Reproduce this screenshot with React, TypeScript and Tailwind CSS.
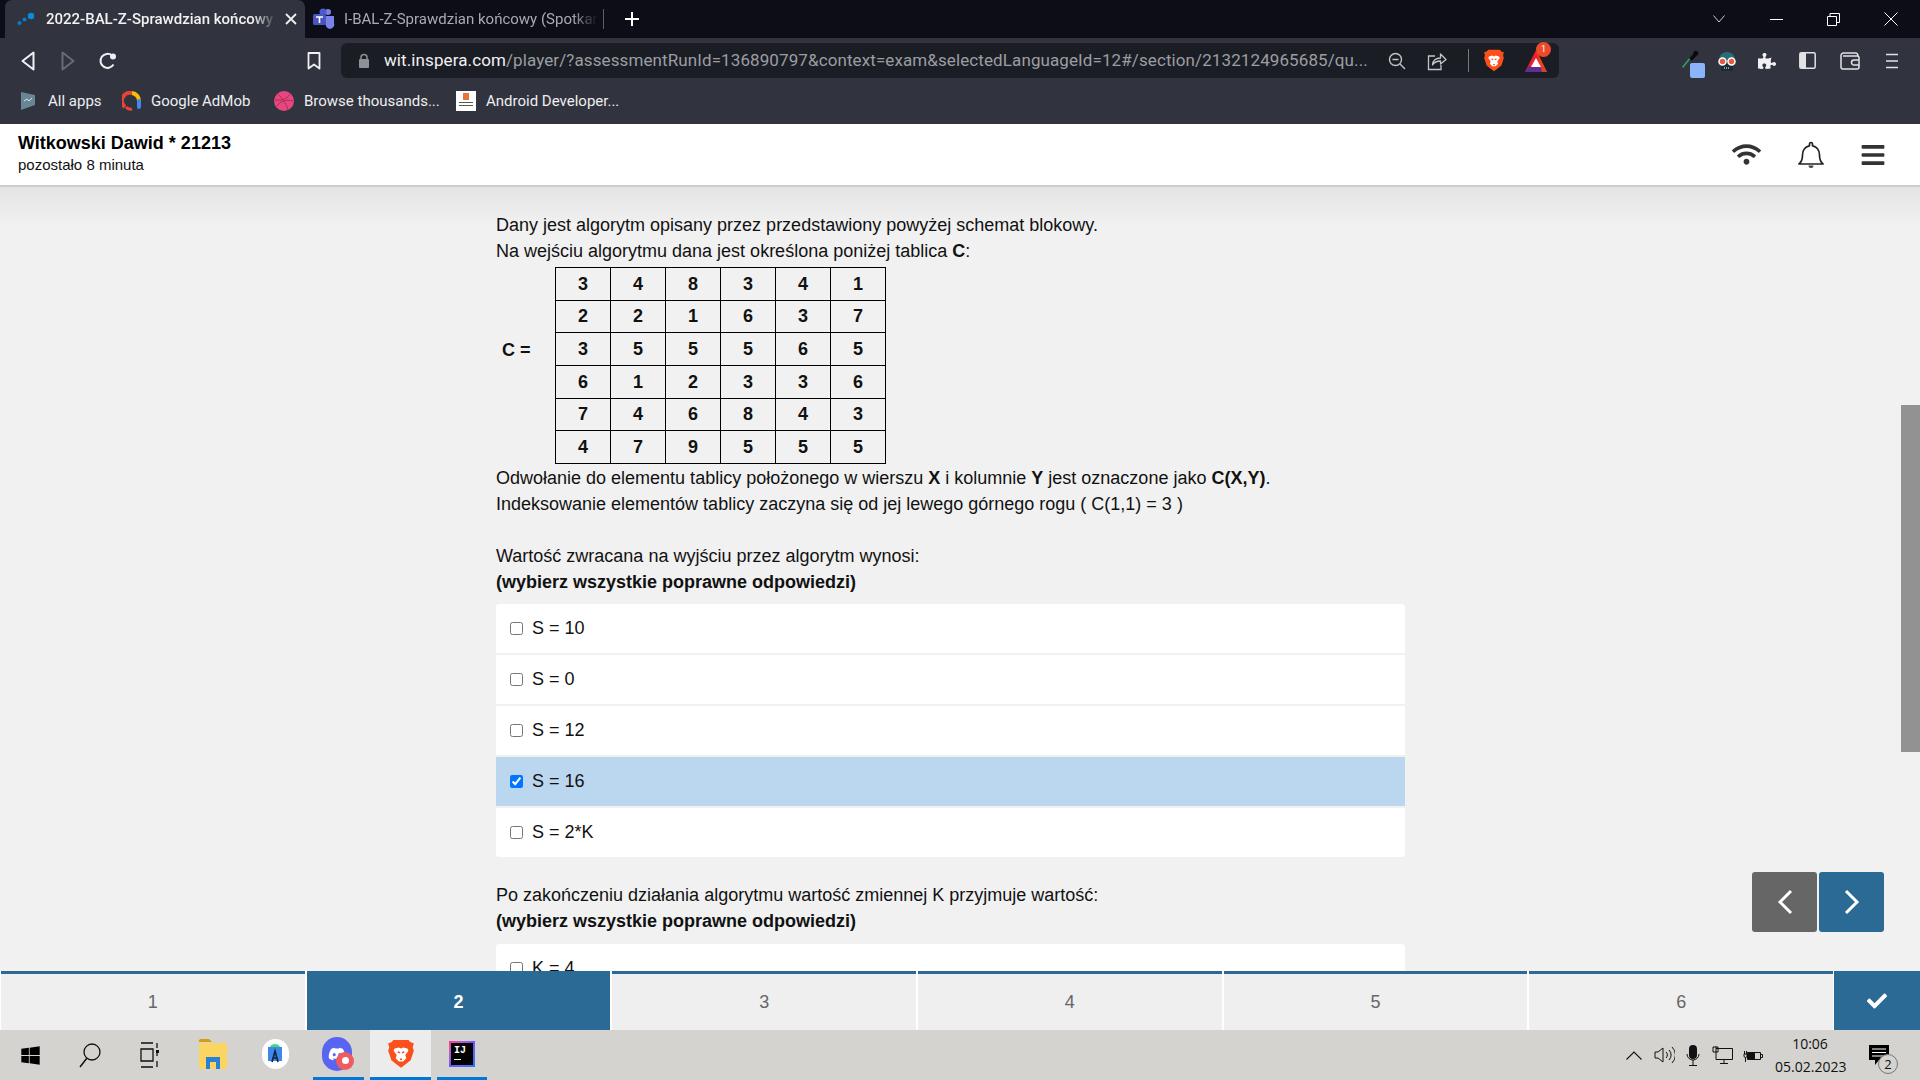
import { FaBars, FaCheck, FaDiscord, FaPuzzlePiece, FaWifi, FaWindows } from "react-icons/fa";

const matrix = [
  [3, 4, 8, 3, 4, 1],
  [2, 2, 1, 6, 3, 7],
  [3, 5, 5, 5, 6, 5],
  [6, 1, 2, 3, 3, 6],
  [7, 4, 6, 8, 4, 3],
  [4, 7, 9, 5, 5, 5],
];

const options = ["S = 10", "S = 0", "S = 12", "S = 16", "S = 2*K"];

function BraveLogo({ size }: { size: number }) {
  return (
    <svg width={size} height={size * 1.15} viewBox="0 0 24 28">
      <path d="M5 1h14l2 2 3 1-1 4 1 3-3 9-5 4-4 3-4-3-5-4-3-9 1-3-1-4 3-1z" fill="#fb4f1c" />
      <path d="M6 9l4-1 2 1 2-1 4 1 1 2-3 4 1 3-3 3h-4l-3-3 1-3-3-4z" fill="#fff" />
      <path d="M9 12l2 1M15 12l-2 1M11 19h2" stroke="#fb4f1c" strokeWidth="1.5" />
    </svg>
  );
}

function BatLogo() {
  return (
    <svg width="24" height="24" viewBox="0 0 24 24">
      <path d="M12 1L1 23h22z" fill="#e8212f" />
      <path d="M1 23l4-6h14l4 6z" fill="#662d91" />
      <path d="M12 1l11 22h-5z" fill="#ff5000" opacity="0.7" />
      <path d="M12 9l-5 9h10z" fill="#fff" />
    </svg>
  );
}

function ChromeTabs() {
  return (
    <div className="h-[38px] bg-[#0c0d17] flex font-['Roboto',sans-serif] text-[15px]">
      <div className="ml-[5px] w-[300px] bg-[#31343f] rounded-t-[7px] flex items-center text-[#f1f1f3] font-medium">
        <svg className="ml-[12px]" width="18" height="14" viewBox="0 0 18 14">
          <circle cx="2.5" cy="11" r="2" fill="#0a7ccf" />
          <circle cx="7.5" cy="7.5" r="2" fill="#0a7ccf" />
          <circle cx="14" cy="4" r="3.2" fill="#0a8ae0" />
        </svg>
        <span className="ml-[11px] w-[230px] overflow-hidden whitespace-nowrap [mask-image:linear-gradient(to_right,black_90%,transparent)]">
          2022-BAL-Z-Sprawdzian końcowy
        </span>
        <svg className="ml-[9px]" width="12" height="12" viewBox="0 0 12 12">
          <path d="M1 1l10 10M11 1L1 11" stroke="#f1f1f3" strokeWidth="1.8" />
        </svg>
      </div>
      <div className="w-[298px] flex items-center text-[#a9abb2]">
        <svg className="ml-[8px]" width="22" height="22" viewBox="0 0 22 22">
          <circle cx="15" cy="4" r="3" fill="#7b83eb" />
          <path d="M10 8h11v7a4 4 0 0 1-8 3z" fill="#7b83eb" />
          <circle cx="10" cy="4" r="3.5" fill="#5059c9" />
          <rect x="0" y="6" width="13" height="11" rx="1.5" fill="#4b53bc" />
          <path d="M3 9h7M6.500 9v6" stroke="#fff" strokeWidth="1.6" />
        </svg>
        <span className="ml-[9px] w-[254px] overflow-hidden whitespace-nowrap [mask-image:linear-gradient(to_right,black_90%,transparent)]">
          I-BAL-Z-Sprawdzian końcowy (Spotkanie)
        </span>
      </div>
      <div className="w-px h-[20px] mt-[9px] bg-[#5a5c66]" />
      <svg className="ml-[20px] mt-[11px]" width="16" height="16" viewBox="0 0 16 16">
        <path d="M8 1v14M1 8h14" stroke="#fff" strokeWidth="2" />
      </svg>
      <div className="ml-auto flex items-center">
        <svg className="mr-[45px]" width="12" height="8" viewBox="0 0 12 8">
          <path d="M.5.500L6 7l5.500-6.500" stroke="#c9cad0" fill="none" />
        </svg>
        <div className="w-[13px] h-px bg-white mr-[44px]" />
        <svg className="mr-[44px]" width="13" height="13" viewBox="0 0 13 13">
          <path d="M.5 3.500h9v9h-9zM3 3.500V.5h9.500v9H9.500" stroke="#fff" fill="none" />
        </svg>
        <svg className="mr-[22px]" width="14" height="14" viewBox="0 0 14 14">
          <path d="M.5.5l13 13M13.500.5l-13 13" stroke="#fff" />
        </svg>
      </div>
    </div>
  );
}

function ChromeToolbar() {
  return (
    <div className="h-[45px] flex items-center pl-[8px]">
      <div className="w-[40px] flex justify-center">
        <svg width="14" height="20" viewBox="0 0 14 20">
          <path d="M12.500 1.500v17L1.500 10z" stroke="#f1f1f3" strokeWidth="2" fill="none" strokeLinejoin="round" />
        </svg>
      </div>
      <div className="w-[40px] flex justify-center">
        <svg width="14" height="20" viewBox="0 0 14 20">
          <path d="M1.500 1.500v17l11-8.500z" stroke="#686a74" strokeWidth="2" fill="none" strokeLinejoin="round" />
        </svg>
      </div>
      <div className="w-[40px] flex justify-center">
        <svg width="18" height="18" viewBox="0 0 18 18">
          <path d="M14.500 12.500A7 7 0 1 1 13 3.500" stroke="#f1f1f3" strokeWidth="2" fill="none" />
          <circle cx="14" cy="4.500" r="3" fill="#f1f1f3" />
        </svg>
      </div>
      <div className="w-[40px] ml-[166px] flex justify-center">
        <svg width="14" height="18" viewBox="0 0 14 18">
          <path d="M1.500 1h11v15.500L7 12.500l-5.500 4z" stroke="#f1f1f3" strokeWidth="1.800" fill="none" strokeLinejoin="round" />
        </svg>
      </div>
      <div className="ml-[7px] w-[1218px] h-[35px] bg-[#1b1d25] rounded-[6px] flex items-center">
        <svg className="ml-[17px]" width="12" height="15" viewBox="0 0 12 15">
          <path d="M3 7V4.500a3 3 0 0 1 6 0V7" stroke="#8f9197" strokeWidth="1.500" fill="none" />
          <rect x="1" y="6" width="10" height="9" rx="1" fill="#8f9197" />
        </svg>
        <div className="ml-[14px] w-[984px] whitespace-nowrap overflow-hidden font-['Roboto',sans-serif] text-[17px] tracking-[0.1px] text-[#9b9da3]">
          <span className="text-[#f1f1f3]">wit.inspera.com</span>
          /player/?assessmentRunId=136890797&amp;context=exam&amp;selectedLanguageId=12#/section/2132124965685/qu...
        </div>
        <svg className="ml-[20px]" width="18" height="18" viewBox="0 0 18 18">
          <circle cx="7.500" cy="7.500" r="6" stroke="#c4c5c9" strokeWidth="1.400" fill="none" />
          <path d="M4.500 7.500h6M12 12l5 5" stroke="#c4c5c9" strokeWidth="1.400" />
        </svg>
        <svg className="ml-[21px]" width="20" height="20" viewBox="0 0 20 20">
          <path d="M8 5H1.500v13.500h12.500V14" stroke="#c4c5c9" strokeWidth="1.300" fill="none" />
          <path d="M5.500 14c.5-5 4-7 8-7V3l5.500 5.500L13.500 13V10c-3 0-6 1-8 4z" stroke="#c4c5c9" strokeWidth="1.300" fill="none" strokeLinejoin="round" />
        </svg>
        <div className="ml-[21px] w-px h-[23px] bg-[#77797f]" />
        <div className="ml-[15px] flex">
          <BraveLogo size={20} />
        </div>
        <div className="ml-[20px] relative flex">
          <BatLogo />
          <span className="absolute left-[12px] -top-[7px] w-[15px] h-[15px] rounded-full bg-[#ee4a2a] text-white text-[9px] leading-[15px] text-center font-['Roboto',sans-serif]">
            1
          </span>
        </div>
      </div>
      <div className="ml-[109px] w-[40px] relative h-[35px]">
        <svg className="absolute left-[12px] top-[7px]" width="20" height="20" viewBox="0 0 24 24">
          <path d="M3 21l9-11" stroke="#2f9e5b" strokeWidth="2" />
          <path d="M11 10l6-6 3 3-6 6z" fill="#0b0b0f" />
          <circle cx="19" cy="4" r="3" fill="#0b0b0f" />
        </svg>
        <div className="absolute left-[22px] top-[20px] w-[15px] h-[15px] rounded-[2px] bg-[#8ab4fb]" />
      </div>
      <div className="w-[38px] flex justify-center">
        <svg width="20" height="22" viewBox="0 0 20 22">
          <path d="M2 10a8 8 0 0 1 16 0v2H2z" fill="#2a6b7c" />
          <path d="M4 14h12v6a1 1 0 0 1-1 1H5a1 1 0 0 1-1-1z" fill="#1b2a33" />
          <circle cx="5.500" cy="11.500" r="3.500" fill="#e85c3e" stroke="#fff" strokeWidth="1.500" />
          <circle cx="14.500" cy="11.500" r="3.500" fill="#e85c3e" stroke="#fff" strokeWidth="1.500" />
          <path d="M7 18h6" stroke="#8fd0dc" strokeWidth="1.500" strokeDasharray="1 1" />
        </svg>
      </div>
      <div className="w-[42px] flex justify-center text-[#f1f1f3] text-[18px]">
        <FaPuzzlePiece />
      </div>
      <div className="w-[38px] flex justify-center">
        <svg width="17" height="17" viewBox="0 0 17 17">
          <rect x=".8" y=".8" width="15.400" height="15.400" rx="1.500" stroke="#e2e2e5" strokeWidth="1.500" fill="none" />
          <rect x="1" y="1" width="6" height="15" fill="#e2e2e5" />
        </svg>
      </div>
      <div className="w-[48px] flex justify-center">
        <svg width="20" height="18" viewBox="0 0 20 18">
          <path d="M1 5V3.500A2.500 2.500 0 0 1 3.500 1h12A2.500 2.500 0 0 1 18 3.500V5M1 4v11a2 2 0 0 0 2 2h14a2 2 0 0 0 2-2V6a2 2 0 0 0-2-2H3" stroke="#e2e2e5" strokeWidth="1.500" fill="none" />
          <path d="M19 8h-5a2.500 2.500 0 0 0 0 5h5" stroke="#e2e2e5" strokeWidth="1.500" fill="none" />
        </svg>
      </div>
      <div className="w-[36px] flex justify-center">
        <svg width="14" height="16" viewBox="0 0 14 16">
          <path d="M1 1.500h12M1 8h12M1 14.500h12" stroke="#e2e2e5" strokeWidth="1.600" />
        </svg>
      </div>
    </div>
  );
}

function Bookmarks() {
  return (
    <div className="h-[36px] flex items-center pl-[20px] font-['Roboto',sans-serif] text-[15px] text-[#eeeef0] whitespace-nowrap">
      <svg width="16" height="18" viewBox="0 0 16 18">
        <path d="M1 0l14 3v10L1 18z" fill="#6a8593" />
        <path d="M4 9l3-2 2 2 3-3" stroke="#dbe4ea" strokeWidth="1" fill="none" />
      </svg>
      <span className="ml-[12px] w-[52px]">All apps</span>
      <svg className="ml-[22px]" width="20" height="20" viewBox="0 0 20 20">
        <path d="M3 16A8 8 0 0 1 10 2" stroke="#ea4335" strokeWidth="4" fill="none" />
        <path d="M10 2a8 8 0 0 1 7 8" stroke="#fbbc04" strokeWidth="4" fill="none" />
        <path d="M17 10v6" stroke="#4285f4" strokeWidth="4" strokeLinecap="round" />
        <path d="M4 16a6 6 0 0 0 6 2" stroke="#ea4335" strokeWidth="3" fill="none" />
      </svg>
      <span className="ml-[9px] w-[102px]">Google AdMob</span>
      <svg className="ml-[21px]" width="20" height="20" viewBox="0 0 20 20">
        <circle cx="10" cy="10" r="10" fill="#e6477e" />
        <path d="M4 3c4 4 8 9 10 16M1 9c6 1 12-1 15-6M3 15c3-5 9-7 16-5" stroke="#b12a5b" fill="none" />
      </svg>
      <span className="ml-[10px] w-[131px]">Browse thousands...</span>
      <div className="ml-[21px] w-[20px] h-[20px] bg-white flex flex-col items-center pt-[2px]">
        <div className="w-[6px] h-[7px] bg-[#e8743b]" />
        <div className="w-[14px] h-px mt-[2px] bg-[#555]" />
        <div className="w-[14px] h-px mt-[2px] bg-[#555]" />
      </div>
      <span className="ml-[10px]">Android Developer...</span>
    </div>
  );
}

function PageHeader() {
  return (
    <header className="h-[63px] shrink-0 bg-white border-b-2 border-[#cccccc] flex items-center font-['Liberation_Sans',sans-serif] relative z-10">
      <div className="ml-[18px] pb-[4px]">
        <div className="text-[18px] leading-[24px] font-bold text-black">Witkowski Dawid * 21213</div>
        <div className="text-[15px] leading-[19px] text-[#111]">pozostało 8 minuta</div>
      </div>
      <div className="ml-auto flex items-center text-[#333]">
        <FaWifi className="text-[29px]" />
        <svg className="ml-[37px]" width="26" height="28" viewBox="0 0 26 28">
          <path
            d="M1 23c2.500-2 3.500-4 3.500-9 0-5 3-8.500 7-9.200V3a1.500 1.500 0 0 1 3 0v1.800c4 .7 7 4.200 7 9.200 0 5 1 7 3.500 9z"
            stroke="#222"
            strokeWidth="1.700"
            fill="none"
            strokeLinejoin="round"
          />
          <path d="M10.500 24.500a2.500 2.500 0 0 0 5 0z" fill="#444" />
        </svg>
        <FaBars className="ml-[36px] mr-[34px] text-[26px]" />
      </div>
    </header>
  );
}

function OptionRow({ label, checked }: { label: string; checked?: boolean }) {
  return (
    <label className={"h-[49px] shrink-0 flex items-center pl-[14px] " + (checked ? "bg-[#bbd6ef]" : "bg-white")}>
      <input type="checkbox" defaultChecked={checked} className="w-[13px] h-[13px] m-0 accent-[#0075ff]" />
      <span className="ml-[9px]">{label}</span>
    </label>
  );
}

function Question() {
  return (
    <div className="w-[909px] ml-[496px] pt-[25px] text-[18px] leading-[26px] text-[#111] font-['Liberation_Sans',sans-serif]">
      <p>Dany jest algorytm opisany przez przedstawiony powyżej schemat blokowy.</p>
      <p>
        Na wejściu algorytmu dana jest określona poniżej tablica <b>C</b>:
      </p>
      <div className="flex items-start mt-[3px] mb-[1px]">
        <b className="w-[59px] pl-[6px] mt-[74px] leading-[18px]">C =</b>
        <table className="w-[331px] table-fixed border-collapse">
          <tbody>
            {matrix.map((row, i) => (
              <tr key={i} className="h-[32.670px]">
                {row.map((n, j) => (
                  <td key={j} className="border border-black text-center font-bold leading-none p-0">
                    {n}
                  </td>
                ))}
              </tr>
            ))}
          </tbody>
        </table>
      </div>
      <p>
        Odwołanie do elementu tablicy położonego w wierszu <b>X</b> i kolumnie <b>Y</b> jest oznaczone jako <b>C(X,Y)</b>.
      </p>
      <p>Indeksowanie elementów tablicy zaczyna się od jej lewego górnego rogu ( C(1,1) = 3 )</p>
      <p className="mt-[26px]">Wartość zwracana na wyjściu przez algorytm wynosi:</p>
      <p className="font-bold">(wybierz wszystkie poprawne odpowiedzi)</p>
      <div className="mt-[9px] flex flex-col gap-[2px] rounded-[3px] overflow-hidden">
        {options.map((o) => (
          <OptionRow key={o} label={o} checked={o === "S = 16"} />
        ))}
      </div>
      <p className="mt-[25px]">Po zakończeniu działania algorytmu wartość zmiennej K przyjmuje wartość:</p>
      <p className="font-bold">(wybierz wszystkie poprawne odpowiedzi)</p>
      <div className="mt-[10px] rounded-t-[3px] overflow-hidden">
        <OptionRow label="K = 4" />
      </div>
    </div>
  );
}

function QuestionNav() {
  return (
    <nav className="h-[59px] shrink-0 bg-white flex pl-px font-['Liberation_Sans',sans-serif] text-[18px]">
      <div className="flex-1 grid grid-cols-6 gap-[2px]">
        {[1, 2, 3, 4, 5, 6].map((n) => (
          <div
            key={n}
            className={
              "flex items-center justify-center border-t-[3px] border-[#2b6a94] " +
              (n === 2 ? "bg-[#2b6a94] text-white font-bold" : "bg-[#efefef] text-[#666]")
            }
          >
            {n}
          </div>
        ))}
      </div>
      <div className="w-[86px] ml-px bg-[#2b6a94] flex items-center justify-center text-white text-[20px]">
        <FaCheck />
      </div>
    </nav>
  );
}

function TaskButton({ children, width, bar, active }: { children: React.ReactNode; width: string; bar?: string; active?: boolean }) {
  return (
    <div className={width + " h-full flex flex-col " + (active ? "px-[2px]" : "")}>
      <div className={"flex-1 flex items-center justify-center " + (active ? "bg-[#ececec]" : "")}>{children}</div>
      <div className={"h-[3px] " + (bar ?? "")} />
    </div>
  );
}

function Taskbar() {
  return (
    <div className="h-[50px] shrink-0 bg-[#d4d3d0] flex items-center font-['Open_Sans',sans-serif] text-[14px] text-[#1a1a1a]">
      <div className="w-[60px] flex justify-center text-[21px] text-black">
        <FaWindows />
      </div>
      <div className="w-[60px] flex justify-center">
        <svg width="22" height="26" viewBox="0 0 22 26">
          <circle cx="13" cy="10" r="8" stroke="#111" strokeWidth="1.300" fill="none" />
          <path d="M8 16L1 25" stroke="#111" strokeWidth="1.500" />
        </svg>
      </div>
      <div className="w-[60px] flex justify-center">
        <svg width="20" height="26" viewBox="0 0 20 26">
          <path d="M1 1h12M1 7h12v12H1zM1 25h12M17 1v5M17 11v3M17 19v6" stroke="#111" strokeWidth="1.300" fill="none" />
          <rect x="16" y="8" width="3" height="3" fill="#111" />
        </svg>
      </div>
      <div className="w-[2px]" />
      <TaskButton width="w-[62px]">
        <svg width="28" height="31" viewBox="0 0 28 31">
          <path d="M0 3a2 2 0 0 1 2-2h8l3 3H0z" fill="#d99a12" />
          <rect x="0" y="5" width="28" height="26" rx="1" fill="#fbd562" />
          <path d="M7 31V19h14v12h-4v-7h-6v7z" fill="#2b7fd4" />
        </svg>
      </TaskButton>
      <TaskButton width="w-[62px]">
        <div className="w-[27px] h-[30px] rounded-full bg-white flex items-center justify-center">
          <svg width="16" height="20" viewBox="0 0 16 20">
            <rect x="1" y="3" width="14" height="14" fill="#3f87e8" />
            <path d="M3 3a5 3 0 0 1 10 0z" fill="#3ddc84" />
            <path d="M5 18L8 7l3 11M6 14h4" stroke="#10243d" strokeWidth="1.600" fill="none" />
          </svg>
        </div>
      </TaskButton>
      <TaskButton width="w-[62px]" bar="bg-[#0078d7] ml-[7px] mr-[4px]">
        <div className="relative w-[30px] h-[34px] rounded-full bg-[#5865f2] flex items-center justify-center text-white text-[18px]">
          <FaDiscord />
          <div className="absolute -right-[2px] bottom-[1px] w-[18px] h-[18px] rounded-full bg-[#ef5b5f] flex items-center justify-center">
            <div className="w-[7px] h-[7px] rounded-full bg-white" />
          </div>
        </div>
      </TaskButton>
      <TaskButton width="w-[65px]" active bar="bg-[#0078d7]">
        <BraveLogo size={26} />
      </TaskButton>
      <TaskButton width="w-[58px]" bar="bg-[#0078d7] mx-[4px]">
        <div className="w-[26px] h-[26px] p-[2px] bg-gradient-to-br from-[#ff318c] via-[#6b57ff] to-[#087cfa]">
          <div className="w-full h-full bg-black text-white font-['Liberation_Mono',monospace] font-bold text-[10px] leading-[11px] pl-[3px] pt-[2px]">
            IJ
            <div className="w-[7px] h-px mt-[3px] bg-white" />
          </div>
        </div>
      </TaskButton>
      <div className="ml-auto flex items-center text-[#111]">
        <svg width="16" height="9" viewBox="0 0 16 9">
          <path d="M.5 8.500L8 1l7.500 7.500" stroke="#111" strokeWidth="1.100" fill="none" />
        </svg>
        <svg className="ml-[12px]" width="21" height="18" viewBox="0 0 21 18">
          <path d="M1 6h3l5-4v14l-5-4H1zM12 6a4 4 0 0 1 0 6M15 4a7 7 0 0 1 0 10M18 1a11 11 0 0 1 0 16" stroke="#111" fill="none" />
        </svg>
        <svg className="ml-[11px]" width="14" height="21" viewBox="0 0 14 21">
          <rect x="3" y="0" width="8" height="14" rx="4" fill="#111" />
          <path d="M1 9a6 6 0 0 0 12 0M7 15v5M3 20.500h8" stroke="#111" fill="none" />
        </svg>
        <svg className="ml-[12px]" width="21" height="18" viewBox="0 0 21 18">
          <path d="M4 2.500h16.500v11H4M4 13.500V.5M1 1h5v5H1zM12 14v3M8 17.500h8" stroke="#111" fill="none" />
        </svg>
        <svg className="ml-[10px]" width="20" height="13" viewBox="0 0 20 13">
          <path d="M4.500 3.500h13v7h-13zM18 5.500h1.500v3H18" stroke="#111" fill="none" />
          <rect x="5" y="4" width="7" height="6" fill="#111" />
          <path d="M1 5h3v2a1.500 1.500 0 0 1-3 0zM2.500 8.500V13M1.500 5V2M3.500 5V2" stroke="#111" fill="none" />
        </svg>
        <div className="ml-[12px] w-[70px] text-center leading-[23px]">
          <div>10:06</div>
          <div>05.02.2023</div>
        </div>
        <div className="relative ml-[24px] mr-[31px] w-[20px] h-[21px]">
          <svg width="20" height="21" viewBox="0 0 20 21">
            <path d="M0 0h20v15H10l-4 5v-5H0z" fill="#000" />
            <path d="M3 4h14M3 7.500h14M3 11h14" stroke="#fff" />
          </svg>
          <span className="absolute left-[9px] top-[9px] w-[20px] h-[20px] rounded-full border border-[#777] bg-[#d4d3d0] text-center text-[13px] leading-[18px]">
            2
          </span>
        </div>
      </div>
    </div>
  );
}

export default function App() {
  return (
    <div className="w-[1920px] h-[1080px] flex flex-col overflow-hidden bg-[#f1f1f1]">
      <div className="h-[124px] shrink-0 bg-[#31343f]">
        <ChromeTabs />
        <ChromeToolbar />
        <Bookmarks />
      </div>
      <PageHeader />
      <main className="relative flex-1 overflow-hidden">
        <div className="absolute inset-x-0 top-0 h-[40px] bg-gradient-to-b from-[#e4e4e4] to-[#f1f1f1]" />
        <div className="relative">
          <Question />
        </div>
        {/* scrollbar */}
        <div className="absolute right-0 top-[218px] w-[19px] h-[347px] bg-[#929292]" />
        <div className="absolute left-[1752px] top-[685px] flex gap-[2px]">
          <div className="w-[65px] h-[60px] rounded-[3px] bg-[#666666] flex items-center justify-center">
            <svg width="16" height="26" viewBox="0 0 16 26">
              <path d="M14 2L3 13l11 11" stroke="#fff" strokeWidth="3" fill="none" />
            </svg>
          </div>
          <div className="w-[65px] h-[60px] rounded-[3px] bg-[#2b6a94] flex items-center justify-center">
            <svg width="16" height="26" viewBox="0 0 16 26">
              <path d="M2 2l11 11L2 24" stroke="#fff" strokeWidth="3" fill="none" />
            </svg>
          </div>
        </div>
      </main>
      <QuestionNav />
      <Taskbar />
    </div>
  );
}
